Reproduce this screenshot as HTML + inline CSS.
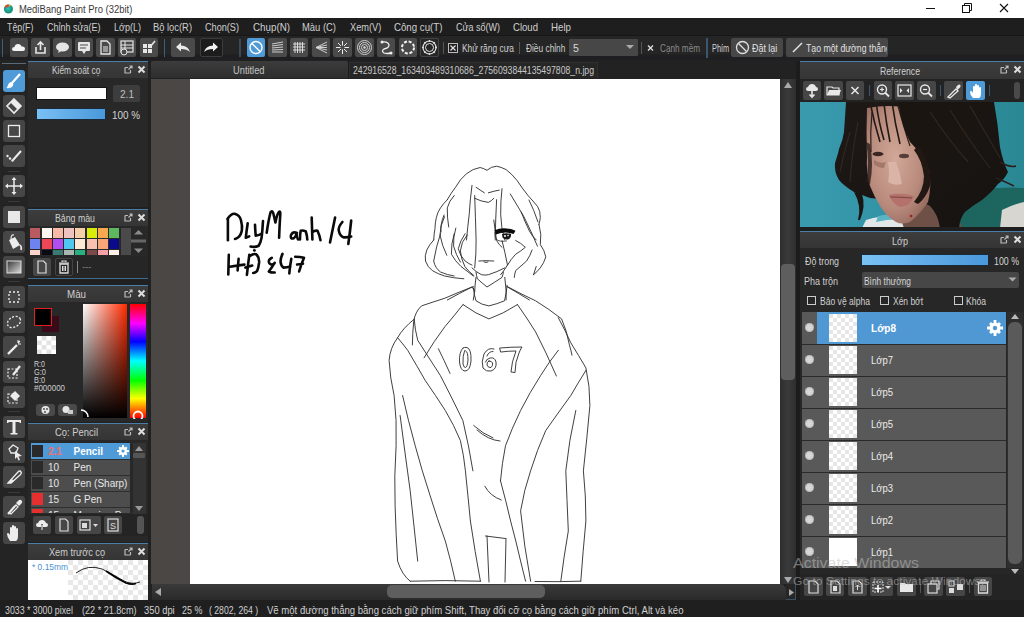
<!DOCTYPE html>
<html><head><meta charset="utf-8">
<style>
*{margin:0;padding:0;box-sizing:border-box}
html,body{width:1024px;height:617px;overflow:hidden;background:#232323;font-family:"Liberation Sans",sans-serif;position:relative}
.a{position:absolute;display:block}
.t{position:absolute;white-space:nowrap;line-height:normal;transform-origin:0 0;font-family:"Liberation Sans",sans-serif}
</style></head><body>
<div class="a" style="left:0px;top:0px;width:1024px;height:18px;background:#ffffff;"></div>
<svg class="a" style="left:3px;top:3px;" width="12" height="12" viewBox="0 0 12 12"><defs><radialGradient id="ib" cx=".45" cy=".45" r=".6"><stop offset="0" stop-color="#30c8b0"/><stop offset=".7" stop-color="#1a9088"/><stop offset="1" stop-color="#2aa860"/></radialGradient></defs><circle cx="5.5" cy="6" r="4.6" fill="url(#ib)"/><path d="M1.6 4.5 Q2.5 1.5 5.5 1.4 Q6 3 4.5 4.2 Q3 5 1.6 4.5Z" fill="#e8402a"/><path d="M5.5 1.4 Q7.5 1.6 8.5 3 Q7 3 6 3.6Z" fill="#f0a030"/></svg>
<div class="t" style="left:18.90px;top:3.55px;font-size:10px;color:#3a3a3a;font-weight:normal;transform:scaleX(0.9444);">MediBang Paint Pro (32bit)</div>
<div class="a" style="left:926px;top:8px;width:9px;height:1px;background:#111;"></div>
<svg class="a" style="left:962px;top:3px;" width="10" height="10" viewBox="0 0 10 10"><rect x="0.5" y="2.5" width="7" height="7" fill="none" stroke="#111"/><path d="M2.5 2.5V0.5H9.5V7.5H7.5" fill="none" stroke="#111"/></svg>
<svg class="a" style="left:999px;top:3px;" width="10" height="10" viewBox="0 0 10 10"><path d="M1 1L9 9M9 1L1 9" stroke="#111" stroke-width="1.1"/></svg>
<div class="a" style="left:0px;top:18px;width:1024px;height:17px;background:#1e1e1e;"></div>
<div class="t" style="left:7.30px;top:20.70px;font-size:10.5px;color:#d0d0d0;font-weight:normal;transform:scaleX(0.8381);">Tệp(F)</div>
<div class="t" style="left:46.90px;top:20.70px;font-size:10.5px;color:#d0d0d0;font-weight:normal;transform:scaleX(0.8580);">Chỉnh sửa(E)</div>
<div class="t" style="left:113.70px;top:20.70px;font-size:10.5px;color:#d0d0d0;font-weight:normal;transform:scaleX(0.8597);">Lớp(L)</div>
<div class="t" style="left:153.00px;top:20.70px;font-size:10.5px;color:#d0d0d0;font-weight:normal;transform:scaleX(0.8911);">Bộ lọc(R)</div>
<div class="t" style="left:205.00px;top:20.70px;font-size:10.5px;color:#d0d0d0;font-weight:normal;transform:scaleX(0.8694);">Chọn(S)</div>
<div class="t" style="left:252.60px;top:20.70px;font-size:10.5px;color:#d0d0d0;font-weight:normal;transform:scaleX(0.9323);">Chụp(N)</div>
<div class="t" style="left:302.30px;top:20.70px;font-size:10.5px;color:#d0d0d0;font-weight:normal;transform:scaleX(0.8966);">Màu (C)</div>
<div class="t" style="left:349.50px;top:20.70px;font-size:10.5px;color:#d0d0d0;font-weight:normal;transform:scaleX(0.8794);">Xem(V)</div>
<div class="t" style="left:394.00px;top:20.70px;font-size:10.5px;color:#d0d0d0;font-weight:normal;transform:scaleX(0.9216);">Công cụ(T)</div>
<div class="t" style="left:455.50px;top:20.70px;font-size:10.5px;color:#d0d0d0;font-weight:normal;transform:scaleX(0.8564);">Cửa sổ(W)</div>
<div class="t" style="left:512.70px;top:20.70px;font-size:10.5px;color:#d0d0d0;font-weight:normal;transform:scaleX(0.9112);">Cloud</div>
<div class="t" style="left:550.80px;top:20.70px;font-size:10.5px;color:#d0d0d0;font-weight:normal;transform:scaleX(0.9255);">Help</div>
<div class="a" style="left:0px;top:35px;width:1024px;height:25px;background:linear-gradient(#252525 0,#252525 76%,#1f1f22 80%,#1f1f22 100%);"></div>
<div class="a" style="left:0px;top:35px;width:1024px;height:1px;background:#171717;"></div>
<div class="a" style="left:2px;top:39px;width:1px;height:18px;background:#3d5d78;"></div>
<div class="a" style="left:10px;top:38px;width:18px;height:19px;background:#4a4a4a;border-radius:2px"></div>
<div class="a" style="left:31px;top:38px;width:19px;height:19px;background:#4a4a4a;border-radius:2px"></div>
<div class="a" style="left:53px;top:38px;width:19px;height:19px;background:#4a4a4a;border-radius:2px"></div>
<div class="a" style="left:75px;top:38px;width:18px;height:19px;background:#4a4a4a;border-radius:2px"></div>
<div class="a" style="left:96px;top:38px;width:19px;height:19px;background:#4a4a4a;border-radius:2px"></div>
<div class="a" style="left:118px;top:38px;width:18px;height:19px;background:#4a4a4a;border-radius:2px"></div>
<div class="a" style="left:140px;top:38px;width:18px;height:19px;background:#4a4a4a;border-radius:2px"></div>
<svg class="a" style="left:10px;top:38px;" width="18" height="19" viewBox="0 0 18 19"><path d="M4 13 Q2 13 2 11 Q2 9 4.5 9 Q5 6 8 6 Q11 6 11.5 8.5 Q15 8 15 11 Q15 13 13 13Z" fill="#f4f4f4"/></svg>
<svg class="a" style="left:31px;top:38px;" width="19" height="19" viewBox="0 0 19 19"><path d="M5 9V15H14V9" fill="none" stroke="#e6e6e6" stroke-width="1.6"/><path d="M9.5 12V4M6.5 7L9.5 4L12.5 7" fill="none" stroke="#e6e6e6" stroke-width="1.6"/></svg>
<svg class="a" style="left:53px;top:38px;" width="19" height="19" viewBox="0 0 19 19"><ellipse cx="9.5" cy="9" rx="6.5" ry="4.5" fill="#e6e6e6"/><path d="M6 12L5 15L9 12.5Z" fill="#e6e6e6"/></svg>
<svg class="a" style="left:75px;top:38px;" width="18" height="19" viewBox="0 0 18 19"><rect x="3" y="4" width="12" height="9" rx="1" fill="#e6e6e6"/><path d="M7 13L9 16L11 13Z" fill="#e6e6e6"/><path d="M5 7H13M5 10H11" stroke="#4a4a4a" stroke-width="1"/></svg>
<svg class="a" style="left:96px;top:38px;" width="19" height="19" viewBox="0 0 19 19"><path d="M5 3H11L14 6V16H5Z" fill="none" stroke="#e6e6e6" stroke-width="1.3"/><path d="M7 9H12M7 11H12M7 13H12" stroke="#e6e6e6" stroke-width="1"/></svg>
<svg class="a" style="left:118px;top:38px;" width="18" height="19" viewBox="0 0 18 19"><rect x="3" y="3" width="12" height="11" fill="none" stroke="#e6e6e6" stroke-width="1.2"/><path d="M3 7H15M3 10H15M7 3V14" stroke="#e6e6e6" stroke-width="1"/><circle cx="6" cy="14" r="3" fill="#4a4a4a" stroke="#e6e6e6" stroke-width="1"/></svg>
<svg class="a" style="left:140px;top:38px;" width="18" height="19" viewBox="0 0 18 19"><rect x="3" y="6" width="4" height="4" fill="#e6e6e6"/><rect x="8" y="6" width="4" height="4" fill="#e6e6e6"/><rect x="3" y="11" width="4" height="4" fill="#e6e6e6"/><rect x="8" y="11" width="4" height="4" fill="#e6e6e6"/><path d="M10 9L15 3" stroke="#e6e6e6" stroke-width="1.6"/></svg>
<div class="a" style="left:164px;top:39px;width:1px;height:18px;background:#3d5d78;"></div>
<div class="a" style="left:171px;top:38px;width:24px;height:19px;background:#4a4a4a;border-radius:2px"></div>
<div class="a" style="left:200px;top:38px;width:23px;height:19px;background:#1c1c1c;border-radius:2px"></div>
<div class="a" style="left:200px;top:38px;width:23px;height:19px;background:#1c1c1c;border:1px solid #3c3c3c;border-radius:2px"></div>
<svg class="a" style="left:171px;top:38px;" width="24" height="19" viewBox="0 0 24 19"><path d="M5 9L10 4.5V7.5Q17 7.5 19 14Q16 11 10 11V13.5Z" fill="#eaeaea"/></svg>
<svg class="a" style="left:200px;top:38px;" width="23" height="19" viewBox="0 0 23 19"><path d="M18 9L13 4.5V7.5Q6 7.5 4 14Q7 11 13 11V13.5Z" fill="#f4f4f4"/></svg>
<div class="a" style="left:239px;top:39px;width:2px;height:18px;background:#3a4a58;"></div>
<div class="a" style="left:247px;top:38px;width:18px;height:19px;background:#4f9bd8;border-radius:2px"></div>
<div class="a" style="left:268px;top:38px;width:19px;height:19px;background:#4a4a4a;border-radius:2px"></div>
<div class="a" style="left:290px;top:38px;width:18px;height:19px;background:#4a4a4a;border-radius:2px"></div>
<div class="a" style="left:312px;top:38px;width:18px;height:19px;background:#4a4a4a;border-radius:2px"></div>
<div class="a" style="left:333px;top:38px;width:19px;height:19px;background:#4a4a4a;border-radius:2px"></div>
<div class="a" style="left:355px;top:38px;width:19px;height:19px;background:#4a4a4a;border-radius:2px"></div>
<div class="a" style="left:377px;top:38px;width:18px;height:19px;background:#4a4a4a;border-radius:2px"></div>
<div class="a" style="left:399px;top:38px;width:18px;height:19px;background:#4a4a4a;border-radius:2px"></div>
<div class="a" style="left:420px;top:38px;width:19px;height:19px;background:#2a2a2a;border-radius:2px"></div>
<div class="a" style="left:420px;top:38px;width:19px;height:19px;background:#262626;border:1px solid #444;border-radius:2px"></div>
<svg class="a" style="left:247px;top:38px;" width="18" height="19" viewBox="0 0 18 19"><circle cx="9" cy="9.5" r="6" fill="none" stroke="#fff" stroke-width="1.4"/><path d="M5 5.5L13 13.5" stroke="#fff" stroke-width="1.4"/></svg>
<svg class="a" style="left:268px;top:38px;" width="19" height="19" viewBox="0 0 19 19"><path d="M4 6L15 4M4 8L15 6.5M4 10L15 9M4 12L15 11.5M4 14L15 14" stroke="#ddd" stroke-width="0.9"/></svg>
<svg class="a" style="left:290px;top:38px;" width="18" height="19" viewBox="0 0 18 19"><path d="M5 4V15M7.5 4V15M10 4V15M12.5 4V15M3 6H15M3 9H15M3 12H15" stroke="#e8e8e8" stroke-width="0.9"/></svg>
<svg class="a" style="left:312px;top:38px;" width="18" height="19" viewBox="0 0 18 19"><path d="M4 9.5L15 4M4 9.5L15 7M4 9.5L15 9.5M4 9.5L15 12M4 9.5L15 15" stroke="#ddd" stroke-width="0.9"/></svg>
<svg class="a" style="left:333px;top:38px;" width="19" height="19" viewBox="0 0 19 19"><path d="M9.5 3V16M3 9.5H16M5 5L14 14M14 5L5 14" stroke="#eee" stroke-width="1"/><circle cx="9.5" cy="9.5" r="2" fill="#4a4a4a"/></svg>
<svg class="a" style="left:355px;top:38px;" width="19" height="19" viewBox="0 0 19 19"><circle cx="9.5" cy="9.5" r="7" fill="none" stroke="#ddd" stroke-width="0.9"/><circle cx="9.5" cy="9.5" r="5" fill="none" stroke="#ddd" stroke-width="0.9"/><circle cx="9.5" cy="9.5" r="3" fill="none" stroke="#ddd" stroke-width="0.9"/><circle cx="9.5" cy="9.5" r="1.2" fill="#ddd"/></svg>
<svg class="a" style="left:377px;top:38px;" width="18" height="19" viewBox="0 0 18 19"><path d="M5 4Q11 3 12 7Q12 10 7 11Q4 13 7 15Q10 16 14 15" fill="none" stroke="#eee" stroke-width="1.3"/><circle cx="5" cy="4" r="1.5" fill="#eee"/><circle cx="14" cy="15" r="1.5" fill="#eee"/></svg>
<svg class="a" style="left:399px;top:38px;" width="18" height="19" viewBox="0 0 18 19"><circle cx="9" cy="9.5" r="6" fill="none" stroke="#f0f0f0" stroke-width="2" stroke-dasharray="3 1.7"/></svg>
<svg class="a" style="left:420px;top:38px;" width="19" height="19" viewBox="0 0 19 19"><circle cx="9.5" cy="9.5" r="6.5" fill="none" stroke="#ddd" stroke-width="1.2"/><circle cx="9.5" cy="9.5" r="4" fill="none" stroke="#ddd" stroke-width="1"/><path d="M9.5 2V4M9.5 15V17M2 9.5H4M15 9.5H17M4.2 4.2L5.6 5.6M13.4 13.4L14.8 14.8M14.8 4.2L13.4 5.6M4.2 14.8L5.6 13.4" stroke="#ddd" stroke-width="1.4"/></svg>
<div class="a" style="left:443px;top:42px;width:1px;height:12px;background:#555;"></div>
<svg class="a" style="left:448px;top:43px;" width="10" height="10" viewBox="0 0 10 10"><rect x="0.5" y="0.5" width="9" height="9" fill="#1e1e1e" stroke="#bbb"/><path d="M2.5 2.5L7.5 7.5M7.5 2.5L2.5 7.5" stroke="#ddd" stroke-width="1.3"/></svg>
<div class="t" style="left:461.60px;top:42.00px;font-size:10.5px;color:#d0d0d0;font-weight:normal;transform:scaleX(0.8019);">Khử răng cưa</div>
<div class="a" style="left:519px;top:42px;width:1px;height:12px;background:#555;"></div>
<div class="t" style="left:525.60px;top:42.00px;font-size:10.5px;color:#d0d0d0;font-weight:normal;transform:scaleX(0.7940);">Điều chỉnh</div>
<div class="a" style="left:569px;top:39px;width:69px;height:17px;background:#474747;border-radius:1px"></div>
<div class="t" style="left:573.00px;top:42.00px;font-size:10.5px;color:#d8d8d8;font-weight:normal;">5</div>
<svg class="a" style="left:625px;top:44px;" width="10" height="6" viewBox="0 0 10 6"><path d="M1 1H9L5 5Z" fill="#aaa"/></svg>
<div class="a" style="left:641px;top:42px;width:1px;height:12px;background:#555;"></div>
<svg class="a" style="left:646px;top:43px;" width="9" height="10" viewBox="0 0 9 10"><path d="M2 2.5L7 7.5M7 2.5L2 7.5" stroke="#ddd" stroke-width="1.4"/></svg>
<div class="t" style="left:659.80px;top:42.00px;font-size:10.5px;color:#8a8a8a;font-weight:normal;transform:scaleX(0.7788);">Cạnh mềm</div>
<div class="a" style="left:706px;top:38px;width:2px;height:20px;background:#3a5670;"></div>
<div class="t" style="left:711.60px;top:42.00px;font-size:10.5px;color:#d0d0d0;font-weight:normal;transform:scaleX(0.7057);">Phím</div>
<div class="a" style="left:731px;top:38px;width:52px;height:19px;background:#474747;border-radius:2px"></div>
<svg class="a" style="left:735px;top:40px;" width="15" height="15" viewBox="0 0 15 15"><circle cx="7.5" cy="7.5" r="6" fill="none" stroke="#e0e0e0" stroke-width="1.3"/><path d="M3.5 3.5L11.5 11.5" stroke="#e0e0e0" stroke-width="1.3"/></svg>
<div class="t" style="left:751.70px;top:42.00px;font-size:10.5px;color:#e0e0e0;font-weight:normal;transform:scaleX(0.8500);">Đặt lại</div>
<div class="a" style="left:786px;top:38px;width:102px;height:19px;background:#474747;border-radius:2px"></div>
<svg class="a" style="left:791px;top:41px;" width="13" height="13" viewBox="0 0 13 13"><path d="M2 11L11 2" stroke="#e8e8e8" stroke-width="1.5"/></svg>
<div class="a" style="left:806px;top:38px;width:81px;height:19px;overflow:hidden">
<div class="t" style="left:0.00px;top:4.00px;font-size:10.5px;color:#e0e0e0;font-weight:normal;transform:scaleX(0.8309);">Tạo một đường thẳng</div>
</div>
<div class="a" style="left:0px;top:60px;width:1024px;height:540px;background:#212121;"></div>
<div class="a" style="left:0px;top:60px;width:28px;height:540px;background:#242424;"></div>
<div class="a" style="left:2px;top:63px;width:24px;height:1px;background:#5a6a78;"></div>
<div class="a" style="left:3px;top:70px;width:22px;height:22px;background:#4f9bd8;border-radius:3px"></div>
<div class="a" style="left:3px;top:95px;width:22px;height:22px;background:#464646;border-radius:3px"></div>
<div class="a" style="left:3px;top:120px;width:22px;height:22px;background:#464646;border-radius:3px"></div>
<div class="a" style="left:3px;top:145px;width:22px;height:22px;background:#464646;border-radius:3px"></div>
<div class="a" style="left:3px;top:175px;width:22px;height:22px;background:#464646;border-radius:3px"></div>
<div class="a" style="left:3px;top:206px;width:22px;height:22px;background:#464646;border-radius:3px"></div>
<div class="a" style="left:3px;top:231px;width:22px;height:22px;background:#464646;border-radius:3px"></div>
<div class="a" style="left:3px;top:256px;width:22px;height:22px;background:#464646;border-radius:3px"></div>
<div class="a" style="left:3px;top:286px;width:22px;height:22px;background:#464646;border-radius:3px"></div>
<div class="a" style="left:3px;top:311px;width:22px;height:22px;background:#464646;border-radius:3px"></div>
<div class="a" style="left:3px;top:336px;width:22px;height:22px;background:#464646;border-radius:3px"></div>
<div class="a" style="left:3px;top:361px;width:22px;height:22px;background:#464646;border-radius:3px"></div>
<div class="a" style="left:3px;top:386px;width:22px;height:22px;background:#464646;border-radius:3px"></div>
<div class="a" style="left:3px;top:416px;width:22px;height:22px;background:#464646;border-radius:3px"></div>
<div class="a" style="left:3px;top:441px;width:22px;height:22px;background:#464646;border-radius:3px"></div>
<div class="a" style="left:3px;top:466px;width:22px;height:22px;background:#464646;border-radius:3px"></div>
<div class="a" style="left:3px;top:496px;width:22px;height:22px;background:#464646;border-radius:3px"></div>
<div class="a" style="left:3px;top:522px;width:22px;height:22px;background:#464646;border-radius:3px"></div>
<div class="a" style="left:8px;top:171px;width:12px;height:1px;background:#3a3a3a;"></div>
<div class="a" style="left:8px;top:201px;width:12px;height:1px;background:#3a3a3a;"></div>
<div class="a" style="left:8px;top:281px;width:12px;height:1px;background:#3a3a3a;"></div>
<div class="a" style="left:8px;top:411px;width:12px;height:1px;background:#3a3a3a;"></div>
<div class="a" style="left:8px;top:492px;width:12px;height:1px;background:#3a3a3a;"></div>
<svg class="a" style="left:3px;top:70px;" width="22" height="22" viewBox="0 0 22 22"><path d="M17 4L9 13" stroke="#fff" stroke-width="2.2"/><path d="M9 12Q6 12 5 15Q4.5 17 3.5 18Q7 18.5 9 17Q11 15 10 13Z" fill="#fff"/></svg>
<svg class="a" style="left:3px;top:95px;" width="22" height="22" viewBox="0 0 22 22"><path d="M11 4L18 11L11 18L4 11Z" fill="none" stroke="#ececec" stroke-width="1.6"/><path d="M11 4L18 11L14.5 14.5L7.5 7.5Z" fill="#ececec"/></svg>
<svg class="a" style="left:3px;top:120px;" width="22" height="22" viewBox="0 0 22 22"><rect x="5.5" y="5.5" width="11" height="11" fill="none" stroke="#ececec" stroke-width="1.3"/></svg>
<svg class="a" style="left:3px;top:145px;" width="22" height="22" viewBox="0 0 22 22"><path d="M10 15L18 6" stroke="#ececec" stroke-width="2"/><circle cx="4.5" cy="11" r="1.2" fill="#ececec"/><circle cx="7" cy="13.5" r="1.2" fill="#ececec"/><circle cx="9.5" cy="15.5" r="1.2" fill="#ececec"/></svg>
<svg class="a" style="left:3px;top:175px;" width="22" height="22" viewBox="0 0 22 22"><path d="M11 3V19M3 11H19" stroke="#ececec" stroke-width="1.5"/><path d="M11 2L8.5 5H13.5ZM11 20L8.5 17H13.5ZM2 11L5 8.5V13.5ZM20 11L17 8.5V13.5Z" fill="#ececec"/></svg>
<svg class="a" style="left:3px;top:206px;" width="22" height="22" viewBox="0 0 22 22"><rect x="5" y="5" width="12" height="12" fill="#e8e8e8"/></svg>
<svg class="a" style="left:3px;top:231px;" width="22" height="22" viewBox="0 0 22 22"><path d="M6 9L12 6L17 14L10 18Z" fill="#ececec"/><path d="M8 8Q8 3 11 4" fill="none" stroke="#ececec" stroke-width="1.2"/><path d="M17 14Q19 16 18 19" stroke="#ececec" stroke-width="1.6" fill="none"/></svg>
<svg class="a" style="left:3px;top:256px;" width="22" height="22" viewBox="0 0 22 22"><defs><linearGradient id="gg" x1="0" y1="0" x2="1" y2="1"><stop offset="0" stop-color="#333"/><stop offset="1" stop-color="#ddd"/></linearGradient></defs><rect x="4" y="5" width="14" height="12" fill="url(#gg)" stroke="#ddd" stroke-width="1"/></svg>
<svg class="a" style="left:3px;top:286px;" width="22" height="22" viewBox="0 0 22 22"><rect x="6" y="6" width="10" height="10" fill="none" stroke="#ececec" stroke-width="1.3" stroke-dasharray="2 2"/></svg>
<svg class="a" style="left:3px;top:311px;" width="22" height="22" viewBox="0 0 22 22"><ellipse cx="11" cy="11" rx="7" ry="5" transform="rotate(-30 11 11)" fill="none" stroke="#ececec" stroke-width="1.3" stroke-dasharray="2 1.6"/></svg>
<svg class="a" style="left:3px;top:336px;" width="22" height="22" viewBox="0 0 22 22"><path d="M5 18L14 9" stroke="#ececec" stroke-width="2.4"/><path d="M15 4V7M18 8H15M17 5L15 7" stroke="#ececec" stroke-width="1.1"/></svg>
<svg class="a" style="left:3px;top:361px;" width="22" height="22" viewBox="0 0 22 22"><rect x="5" y="8" width="9" height="9" fill="none" stroke="#ececec" stroke-width="1.2" stroke-dasharray="2 1.5"/><path d="M10 14L17 5" stroke="#ececec" stroke-width="2.2"/></svg>
<svg class="a" style="left:3px;top:386px;" width="22" height="22" viewBox="0 0 22 22"><rect x="5" y="8" width="9" height="9" fill="none" stroke="#ececec" stroke-width="1.2" stroke-dasharray="2 1.5"/><path d="M12 5L17 10L12 15L7 10Z" fill="#ececec"/></svg>
<svg class="a" style="left:3px;top:416px;" width="22" height="22" viewBox="0 0 22 22"><path d="M4 4H18V7H16.5V6H12.5V17H14.5V18.5H7.5V17H9.5V6H5.5V7H4Z" fill="#ececec"/></svg>
<svg class="a" style="left:3px;top:441px;" width="22" height="22" viewBox="0 0 22 22"><path d="M6 8L10 4L15 7L13 12L8 12Z" fill="none" stroke="#ececec" stroke-width="1.3"/><path d="M12 10L19 15L15.5 15.5L17 19L15.5 19.5L14 16L12 18Z" fill="#ececec"/></svg>
<svg class="a" style="left:3px;top:466px;" width="22" height="22" viewBox="0 0 22 22"><path d="M5 17L15 6Q17 4 18 6Q19 7 17 9L8 17Z" fill="none" stroke="#ececec" stroke-width="1.3"/><path d="M5 17L9 13L11 15L8 17Z" fill="#ececec"/></svg>
<svg class="a" style="left:3px;top:496px;" width="22" height="22" viewBox="0 0 22 22"><path d="M5 18L12 10" stroke="#ececec" stroke-width="2" fill="none"/><path d="M6 17L13 9L15 11L8 18Z" fill="none" stroke="#ececec" stroke-width="1.2"/><path d="M13 7L15 5Q17 3 18.5 4.5Q20 6 18 8L16 10Z" fill="#ececec"/></svg>
<svg class="a" style="left:3px;top:522px;" width="22" height="22" viewBox="0 0 22 22"><path d="M7 19Q4 15 4 12Q4 11 5 11Q6 11 7 13V6Q7 5 8 5Q9 5 9 6V11V4Q9 3 10 3Q11 3 11 4V11V5Q11 4 12 4Q13 4 13 5V11V7Q13 6 14 6Q15 6 15 7V14Q15 18 13 19Z" fill="#ececec"/></svg>
<div class="a" style="left:28px;top:61px;width:120px;height:146px;background:#282828;"></div>
<div class="a" style="left:28px;top:61px;width:120px;height:1px;background:#4a7ea8;"></div>
<div class="a" style="left:28px;top:62px;width:120px;height:16px;background:linear-gradient(#3d3d3d,#353535);"></div>
<div class="t" style="left:51.65px;top:64.00px;font-size:10.5px;color:#cfcfcf;font-weight:normal;transform:scaleX(0.7957);">Kiểm soát cọ</div>
<svg class="a" style="left:124px;top:65px;" width="9" height="9" viewBox="0 0 9 9"><path d="M1 2.5V8H6.5" fill="none" stroke="#bbb" stroke-width="1.2"/><path d="M1 2.5H4M6.5 8V5" stroke="#bbb" stroke-width="1.2"/><path d="M4.5 4.5L8 1M5.5 1H8V3.5" stroke="#bbb" stroke-width="1.2" fill="none"/></svg>
<svg class="a" style="left:137px;top:65px;" width="9" height="9" viewBox="0 0 9 9"><path d="M1.5 1.5L7.5 7.5M7.5 1.5L1.5 7.5" stroke="#ddd" stroke-width="2"/></svg>
<div class="a" style="left:36px;top:87px;width:71px;height:13px;background:#ffffff;border:1px solid #151515"></div>
<div class="a" style="left:113px;top:85px;width:27px;height:17px;background:#3d3d3d;border-radius:2px"></div>
<div class="t" style="left:120.00px;top:88.00px;font-size:10.5px;color:#bdbdbd;font-weight:normal;transform:scaleX(0.9583);">2.1</div>
<div class="a" style="left:36px;top:108px;width:70px;height:12px;background:linear-gradient(90deg,#79c0f4,#4a98da);border:1px solid #1a2a3a"></div>
<div class="t" style="left:111.50px;top:108.50px;font-size:10.5px;color:#d4d4d4;font-weight:normal;transform:scaleX(0.9402);">100 %</div>
<div class="a" style="left:28px;top:209px;width:120px;height:70px;background:#282828;"></div>
<div class="a" style="left:28px;top:209px;width:120px;height:1px;background:#4a7ea8;"></div>
<div class="a" style="left:28px;top:210px;width:120px;height:16px;background:linear-gradient(#3d3d3d,#353535);"></div>
<div class="t" style="left:55.20px;top:212.00px;font-size:10.5px;color:#cfcfcf;font-weight:normal;transform:scaleX(0.8355);">Bảng màu</div>
<svg class="a" style="left:124px;top:213px;" width="9" height="9" viewBox="0 0 9 9"><path d="M1 2.5V8H6.5" fill="none" stroke="#bbb" stroke-width="1.2"/><path d="M1 2.5H4M6.5 8V5" stroke="#bbb" stroke-width="1.2"/><path d="M4.5 4.5L8 1M5.5 1H8V3.5" stroke="#bbb" stroke-width="1.2" fill="none"/></svg>
<svg class="a" style="left:137px;top:213px;" width="9" height="9" viewBox="0 0 9 9"><path d="M1.5 1.5L7.5 7.5M7.5 1.5L1.5 7.5" stroke="#ddd" stroke-width="2"/></svg>
<div class="a" style="left:28px;top:278px;width:120px;height:1px;background:#3e6a8e;"></div>
<div class="a" style="left:30.2px;top:228px;width:10px;height:10px;background:#b85a5e;"></div>
<div class="a" style="left:41.5px;top:228px;width:10px;height:10px;background:#fdf6ef;"></div>
<div class="a" style="left:52.7px;top:228px;width:10px;height:10px;background:#f8b9a7;"></div>
<div class="a" style="left:64.0px;top:228px;width:10px;height:10px;background:#efc4c0;"></div>
<div class="a" style="left:75.2px;top:228px;width:10px;height:10px;background:#f6cea8;"></div>
<div class="a" style="left:86.5px;top:228px;width:10px;height:10px;background:#d9eb08;"></div>
<div class="a" style="left:97.8px;top:228px;width:10px;height:10px;background:#f9a84f;"></div>
<div class="a" style="left:109.0px;top:228px;width:10px;height:10px;background:#5db75e;"></div>
<div class="a" style="left:30.2px;top:239.3px;width:10px;height:10px;background:#6e83ef;"></div>
<div class="a" style="left:41.5px;top:239.3px;width:10px;height:10px;background:#ef4557;"></div>
<div class="a" style="left:52.7px;top:239.3px;width:10px;height:10px;background:#b04ef0;"></div>
<div class="a" style="left:64.0px;top:239.3px;width:10px;height:10px;background:#4fc7ef;"></div>
<div class="a" style="left:75.2px;top:239.3px;width:10px;height:10px;background:#fde8d5;"></div>
<div class="a" style="left:86.5px;top:239.3px;width:10px;height:10px;background:#f8c0ae;"></div>
<div class="a" style="left:97.8px;top:239.3px;width:10px;height:10px;background:#f9a57a;"></div>
<div class="a" style="left:109.0px;top:239.3px;width:10px;height:10px;background:#0a0a8a;"></div>
<div class="a" style="left:30.2px;top:250.4px;width:10px;height:4.4px;background:#f9d3cc;"></div>
<div class="a" style="left:41.5px;top:250.4px;width:10px;height:4.4px;background:#0a0a14;"></div>
<div class="a" style="left:52.7px;top:250.4px;width:10px;height:4.4px;background:#3a7a70;"></div>
<div class="a" style="left:64.0px;top:250.4px;width:10px;height:4.4px;background:#a8b8b0;"></div>
<div class="a" style="left:75.2px;top:250.4px;width:10px;height:4.4px;background:#2ab080;"></div>
<div class="a" style="left:86.5px;top:250.4px;width:10px;height:4.4px;background:#7a4a4a;"></div>
<div class="a" style="left:97.8px;top:250.4px;width:10px;height:4.4px;background:#f6a0a8;"></div>
<div class="a" style="left:109.0px;top:250.4px;width:10px;height:4.4px;background:#fdf0e8;"></div>
<div class="a" style="left:120.6px;top:228px;width:10px;height:27px;background:#4a4a4a;"></div>
<svg class="a" style="left:131px;top:228px;" width="15" height="27" viewBox="0 0 15 27"><path d="M7.5 2L12 6.5H3Z" fill="#8a8a8a"/><rect x="0" y="11.5" width="15" height="3" fill="#666"/><path d="M7.5 25L12 20.5H3Z" fill="#8a8a8a"/></svg>
<div class="a" style="left:28px;top:256px;width:120px;height:22px;background:#262626;"></div>
<div class="a" style="left:33px;top:258px;width:18px;height:18px;background:#474747;border-radius:2px"></div>
<div class="a" style="left:55px;top:258px;width:18px;height:18px;background:#262626;border:1px solid #444;border-radius:2px"></div>
<svg class="a" style="left:33px;top:258px;" width="18" height="18" viewBox="0 0 18 18"><path d="M5 3H10.5L13 5.5V15H5Z" fill="none" stroke="#ddd" stroke-width="1.2"/></svg>
<svg class="a" style="left:55px;top:258px;" width="18" height="18" viewBox="0 0 18 18"><path d="M4 5H14M7 4V3H11V4" stroke="#ddd" stroke-width="1.2" fill="none"/><path d="M5 6H13V15H5Z" fill="none" stroke="#ddd" stroke-width="1.3"/><path d="M7.5 8V13M9 8V13M10.5 8V13" stroke="#ddd" stroke-width="1"/></svg>
<div class="a" style="left:77px;top:261px;width:1px;height:12px;background:#888;"></div>
<div class="t" style="left:82.30px;top:261.86px;font-size:9px;color:#8a8a8a;font-weight:normal;">---</div>
<div class="a" style="left:28px;top:285px;width:120px;height:137px;background:#282828;"></div>
<div class="a" style="left:28px;top:285px;width:120px;height:1px;background:#4a7ea8;"></div>
<div class="a" style="left:28px;top:286px;width:120px;height:16px;background:linear-gradient(#3d3d3d,#353535);"></div>
<div class="t" style="left:66.50px;top:288.00px;font-size:10.5px;color:#cfcfcf;font-weight:normal;transform:scaleX(0.9297);">Màu</div>
<svg class="a" style="left:124px;top:289px;" width="9" height="9" viewBox="0 0 9 9"><path d="M1 2.5V8H6.5" fill="none" stroke="#bbb" stroke-width="1.2"/><path d="M1 2.5H4M6.5 8V5" stroke="#bbb" stroke-width="1.2"/><path d="M4.5 4.5L8 1M5.5 1H8V3.5" stroke="#bbb" stroke-width="1.2" fill="none"/></svg>
<svg class="a" style="left:137px;top:289px;" width="9" height="9" viewBox="0 0 9 9"><path d="M1.5 1.5L7.5 7.5M7.5 1.5L1.5 7.5" stroke="#ddd" stroke-width="2"/></svg>
<div class="a" style="left:42.4px;top:315.7px;width:16.6px;height:16.6px;background:#3a0a18;"></div>
<div class="a" style="left:33.9px;top:307.8px;width:17.8px;height:17.8px;background:#000;border:1.5px solid #e02020"></div>
<svg class="a" style="left:37px;top:336px;" width="19" height="18" viewBox="0 0 19 18"><rect width="19" height="18" fill="#fff"/><rect x="4.75" y="0.0" width="4.75" height="4.5" fill="#e2e2e2"/><rect x="14.25" y="0.0" width="4.75" height="4.5" fill="#e2e2e2"/><rect x="0.0" y="4.5" width="4.75" height="4.5" fill="#e2e2e2"/><rect x="9.5" y="4.5" width="4.75" height="4.5" fill="#e2e2e2"/><rect x="4.75" y="9.0" width="4.75" height="4.5" fill="#e2e2e2"/><rect x="14.25" y="9.0" width="4.75" height="4.5" fill="#e2e2e2"/><rect x="0.0" y="13.5" width="4.75" height="4.5" fill="#e2e2e2"/><rect x="9.5" y="13.5" width="4.75" height="4.5" fill="#e2e2e2"/></svg>
<div class="t" style="left:34.00px;top:358.67px;font-size:9.2px;color:#cfcfcf;font-weight:normal;transform:scaleX(0.7686);">R:0</div>
<div class="t" style="left:34.00px;top:366.77px;font-size:9.2px;color:#cfcfcf;font-weight:normal;transform:scaleX(0.8101);">G:0</div>
<div class="t" style="left:34.00px;top:374.87px;font-size:9.2px;color:#cfcfcf;font-weight:normal;transform:scaleX(0.7973);">B:0</div>
<div class="t" style="left:34.00px;top:382.97px;font-size:9.2px;color:#cfcfcf;font-weight:normal;transform:scaleX(0.8664);">#000000</div>
<div class="a" style="left:36px;top:404px;width:19px;height:12px;background:#4a4a4a;border-radius:3px"></div>
<div class="a" style="left:58px;top:404px;width:19px;height:12px;background:#4a4a4a;border-radius:3px"></div>
<svg class="a" style="left:36px;top:404px;" width="19" height="12" viewBox="0 0 19 12"><circle cx="9.5" cy="6" r="4" fill="#e6e6e6"/><circle cx="8" cy="5" r="0.9" fill="#444"/><circle cx="11" cy="5" r="0.9" fill="#444"/><circle cx="9" cy="8" r="0.9" fill="#444"/></svg>
<svg class="a" style="left:58px;top:404px;" width="19" height="12" viewBox="0 0 19 12"><circle cx="8" cy="5.5" r="3.5" fill="#e6e6e6"/><rect x="10" y="6" width="5" height="4" fill="#ccc"/></svg>
<div class="a" style="left:82.6px;top:303.6px;width:44.4px;height:114px;background:linear-gradient(to bottom,rgba(0,0,0,0),#000),linear-gradient(to right,#fff,#ff2a00)"></div>
<div class="a" style="left:129.7px;top:303.6px;width:16.4px;height:114px;background:linear-gradient(to bottom,#ff0000 0%,#ff00ff 17%,#0000ff 33%,#00ffff 50%,#00ff00 67%,#ffff00 83%,#ff0000 100%)"></div>
<svg class="a" style="left:80px;top:409px;" width="10" height="10" viewBox="0 0 10 10"><path d="M1 1A7 7 0 0 1 8 8" fill="none" stroke="#fff" stroke-width="1.6"/></svg>
<svg class="a" style="left:131px;top:409px;" width="14" height="10" viewBox="0 0 14 10"><circle cx="7" cy="7" r="4.5" fill="none" stroke="#fff" stroke-width="1.8"/></svg>
<div class="a" style="left:28px;top:423px;width:120px;height:119px;background:#282828;"></div>
<div class="a" style="left:28px;top:423px;width:120px;height:1px;background:#4a7ea8;"></div>
<div class="a" style="left:28px;top:424px;width:120px;height:16px;background:linear-gradient(#3d3d3d,#353535);"></div>
<div class="t" style="left:55.10px;top:426.00px;font-size:10.5px;color:#cfcfcf;font-weight:normal;transform:scaleX(0.8985);">Cọ: Pencil</div>
<svg class="a" style="left:124px;top:427px;" width="9" height="9" viewBox="0 0 9 9"><path d="M1 2.5V8H6.5" fill="none" stroke="#bbb" stroke-width="1.2"/><path d="M1 2.5H4M6.5 8V5" stroke="#bbb" stroke-width="1.2"/><path d="M4.5 4.5L8 1M5.5 1H8V3.5" stroke="#bbb" stroke-width="1.2" fill="none"/></svg>
<svg class="a" style="left:137px;top:427px;" width="9" height="9" viewBox="0 0 9 9"><path d="M1.5 1.5L7.5 7.5M7.5 1.5L1.5 7.5" stroke="#ddd" stroke-width="2"/></svg>
<div class="a" style="left:31px;top:443px;width:99px;height:71px;background:#4d4d4d;"></div>
<div class="a" style="left:31px;top:443px;width:99px;height:16px;background:#4f9bd8;"></div>
<div class="a" style="left:32px;top:445px;width:11px;height:12px;background:#2a2a2a;"></div>
<div class="t" style="left:48.00px;top:445.95px;font-size:10px;color:#f07070;font-weight:bold;">2.1</div>
<div class="t" style="left:73.50px;top:445.95px;font-size:10px;color:#ffffff;font-weight:bold;">Pencil</div>
<div class="a" style="left:31px;top:459px;width:99px;height:1px;background:#2e2e2e;"></div>
<div class="a" style="left:32px;top:461px;width:11px;height:12px;background:#2a2a2a;"></div>
<div class="t" style="left:48.00px;top:461.95px;font-size:10px;color:#e8e8e8;font-weight:normal;">10</div>
<div class="t" style="left:73.50px;top:461.95px;font-size:10px;color:#e8e8e8;font-weight:normal;">Pen</div>
<div class="a" style="left:31px;top:475px;width:99px;height:1px;background:#2e2e2e;"></div>
<div class="a" style="left:32px;top:477px;width:11px;height:12px;background:#2a2a2a;"></div>
<div class="t" style="left:48.00px;top:477.95px;font-size:10px;color:#e8e8e8;font-weight:normal;">10</div>
<div class="t" style="left:73.50px;top:477.95px;font-size:10px;color:#e8e8e8;font-weight:normal;">Pen (Sharp)</div>
<div class="a" style="left:31px;top:491px;width:99px;height:1px;background:#2e2e2e;"></div>
<div class="a" style="left:32px;top:493px;width:11px;height:12px;background:#e53030;"></div>
<div class="t" style="left:48.00px;top:493.95px;font-size:10px;color:#e8e8e8;font-weight:normal;">15</div>
<div class="t" style="left:73.50px;top:493.95px;font-size:10px;color:#e8e8e8;font-weight:normal;">G Pen</div>
<div class="a" style="left:31px;top:507px;width:99px;height:1px;background:#2e2e2e;"></div>
<div class="a" style="left:32px;top:509px;width:11px;height:12px;background:#e53030;"></div>
<div class="t" style="left:48.00px;top:509.95px;font-size:10px;color:#e8e8e8;font-weight:normal;">15</div>
<div class="t" style="left:73.50px;top:509.95px;font-size:10px;color:#e8e8e8;font-weight:normal;">Mapping Pen</div>
<div class="a" style="left:28px;top:513px;width:104px;height:1px;background:#2a2a2a;"></div>
<svg class="a" style="left:116px;top:444px;" width="14" height="14" viewBox="0 0 14 14"><g fill="#fff"><circle cx="7" cy="7" r="4"/><path d="M6 1H8V13H6ZM1 6H13V8H1Z"/><path d="M2.5 3.9L3.9 2.5L11.5 10.1L10.1 11.5ZM10.1 2.5L11.5 3.9L3.9 11.5L2.5 10.1Z"/></g><circle cx="7" cy="7" r="1.6" fill="#4f9bd8"/></svg>
<div class="a" style="left:132.5px;top:443px;width:13px;height:71px;background:#333;"></div>
<svg class="a" style="left:132px;top:443px;" width="14" height="71" viewBox="0 0 14 71"><path d="M7 3L11 8H3Z" fill="#9a9a9a"/><rect x="1" y="10" width="12" height="5" fill="#555" rx="1"/><path d="M7 68L11 63H3Z" fill="#9a9a9a"/></svg>
<div class="a" style="left:28px;top:514px;width:120px;height:22px;background:#242424;"></div>
<div class="a" style="left:33px;top:516px;width:18px;height:18px;background:#464646;border-radius:2px"></div>
<div class="a" style="left:55px;top:516px;width:18px;height:18px;background:#464646;border-radius:2px"></div>
<div class="a" style="left:77px;top:516px;width:24px;height:18px;background:#464646;border-radius:2px"></div>
<div class="a" style="left:104px;top:516px;width:18px;height:18px;background:#464646;border-radius:2px"></div>
<div class="a" style="left:137px;top:516px;width:7px;height:18px;background:#555;border-radius:3px"></div>
<svg class="a" style="left:33px;top:516px;" width="18" height="18" viewBox="0 0 18 18"><path d="M5 11Q3 11 3 9Q3 7 5 7Q6 4 9 4Q12 4 13 7Q15 7 15 9Q15 11 13 11Z" fill="#eee"/><path d="M9 8V15M6.5 12.5L9 15L11.5 12.5" stroke="#464646" stroke-width="1.4" fill="none"/><path d="M9 9V14" stroke="#eee" stroke-width="1"/></svg>
<svg class="a" style="left:55px;top:516px;" width="18" height="18" viewBox="0 0 18 18"><path d="M5 3H10.5L13 5.5V15H5Z" fill="none" stroke="#ddd" stroke-width="1.2"/></svg>
<svg class="a" style="left:77px;top:516px;" width="24" height="18" viewBox="0 0 24 18"><rect x="3" y="4" width="10" height="10" fill="none" stroke="#ddd" stroke-width="1.2"/><rect x="5" y="7" width="5" height="5" fill="#ddd"/><path d="M16 8H21L18.5 11Z" fill="#ddd"/></svg>
<svg class="a" style="left:104px;top:516px;" width="18" height="18" viewBox="0 0 18 18"><rect x="4" y="3" width="10" height="12" fill="none" stroke="#ddd" stroke-width="1.2"/><text x="9" y="13" font-size="9" fill="#ddd" text-anchor="middle" font-family="Liberation Sans">S</text></svg>
<div class="a" style="left:28px;top:543px;width:120px;height:57px;background:#282828;"></div>
<div class="a" style="left:28px;top:543px;width:120px;height:1px;background:#4a7ea8;"></div>
<div class="a" style="left:28px;top:544px;width:120px;height:16px;background:linear-gradient(#3d3d3d,#353535);"></div>
<div class="t" style="left:48.60px;top:546.00px;font-size:10.5px;color:#cfcfcf;font-weight:normal;transform:scaleX(0.8737);">Xem trước cọ</div>
<svg class="a" style="left:124px;top:547px;" width="9" height="9" viewBox="0 0 9 9"><path d="M1 2.5V8H6.5" fill="none" stroke="#bbb" stroke-width="1.2"/><path d="M1 2.5H4M6.5 8V5" stroke="#bbb" stroke-width="1.2"/><path d="M4.5 4.5L8 1M5.5 1H8V3.5" stroke="#bbb" stroke-width="1.2" fill="none"/></svg>
<svg class="a" style="left:137px;top:547px;" width="9" height="9" viewBox="0 0 9 9"><path d="M1.5 1.5L7.5 7.5M7.5 1.5L1.5 7.5" stroke="#ddd" stroke-width="2"/></svg>
<div class="a" style="left:28px;top:560px;width:40px;height:40px;background:#ffffff;"></div>
<svg class="a" style="left:68px;top:560px;" width="80" height="40" viewBox="0 0 80 40"><defs><pattern id="ck" width="10" height="10" patternUnits="userSpaceOnUse"><rect width="10" height="10" fill="#fff"/><rect width="5" height="5" fill="#e8e8e8"/><rect x="5" y="5" width="5" height="5" fill="#e8e8e8"/></pattern></defs><rect width="80" height="40" fill="url(#ck)"/><path d="M8 13Q20 4 34 9Q46 15 56 21Q64 25 72 22" fill="none" stroke="#222" stroke-width="1"/><path d="M38 11Q48 18 58 23Q64 25 68 23.5" fill="none" stroke="#000" stroke-width="1.8"/></svg>
<div class="t" style="left:32.00px;top:562.36px;font-size:9px;color:#4a8fd0;font-weight:normal;transform:scaleX(0.9347);">* 0.15mm</div>
<div class="a" style="left:151px;top:61px;width:647px;height:19px;background:#222222;"></div>
<div class="a" style="left:151px;top:61px;width:197px;height:17px;background:linear-gradient(#3c3c3c,#2e2e2e);border-radius:2px 2px 0 0"></div>
<div class="a" style="left:349px;top:62px;width:249px;height:16px;background:#262626;border:1px solid #2e2e2e;border-bottom:none"></div>
<div class="t" style="left:232.75px;top:64.75px;font-size:10px;color:#c4c4c4;font-weight:normal;transform:scaleX(0.9290);">Untitled</div>
<div class="a" style="left:348px;top:61px;width:1px;height:18px;background:#1b1b1b;"></div>
<div class="t" style="left:353.00px;top:65.15px;font-size:10px;color:#c8c8c8;font-weight:normal;transform:scaleX(0.8684);">242916528_163403489310686_2756093844135497808_n.jpg</div>
<div class="a" style="left:151px;top:79px;width:629px;height:505px;background:#4a4744;"></div>
<div class="a" style="left:190px;top:79px;width:590px;height:505px;background:#ffffff;"></div>
<div class="a" style="left:780px;top:79px;width:16px;height:505px;background:linear-gradient(90deg,#2e2e2e,#3a3a3a,#2e2e2e);"></div>
<div class="a" style="left:781px;top:264px;width:14px;height:116px;background:#5e5e5e;border-radius:4px"></div>
<svg class="a" style="left:780px;top:79px;" width="16" height="12" viewBox="0 0 16 12"><path d="M8 3L12 9H4Z" fill="#aaa"/></svg>
<svg class="a" style="left:780px;top:575px;" width="16" height="10" viewBox="0 0 16 10"><path d="M8 8L12 2H4Z" fill="#aaa"/></svg>
<div class="a" style="left:152px;top:584px;width:634px;height:16px;background:linear-gradient(#3a3a3a,#2a2a2a);border-radius:0 6px 0 0"></div>
<div class="a" style="left:786px;top:584px;width:10px;height:16px;background:#262626;border:1px solid #3a5060;border-top:none;border-left:none"></div>
<div class="a" style="left:387px;top:585px;width:158px;height:13px;background:#5e5e5e;border-radius:5px"></div>
<svg class="a" style="left:152px;top:584px;" width="12" height="16" viewBox="0 0 12 16"><path d="M3 8L9 4V12Z" fill="#aaa"/></svg>
<svg class="a" style="left:786px;top:584px;" width="10" height="16" viewBox="0 0 10 16"><path d="M8 8.5L3 5V12Z" fill="#aaa"/></svg>
<div class="a" style="left:796px;top:61px;width:4px;height:540px;background:#1c1c1c;"></div>
<div class="a" style="left:800px;top:61px;width:224px;height:539px;background:#262626;"></div>
<div class="a" style="left:800px;top:61px;width:224px;height:1px;background:#4a7ea8;"></div>
<div class="a" style="left:800px;top:62px;width:224px;height:17px;background:linear-gradient(#3d3d3d,#353535);"></div>
<div class="t" style="left:879.50px;top:65.00px;font-size:10.5px;color:#d0d0d0;font-weight:normal;transform:scaleX(0.8255);">Reference</div>
<svg class="a" style="left:1000px;top:65px;" width="9" height="9" viewBox="0 0 9 9"><path d="M1 2.5V8H6.5" fill="none" stroke="#bbb" stroke-width="1.2"/><path d="M1 2.5H4M6.5 8V5" stroke="#bbb" stroke-width="1.2"/><path d="M4.5 4.5L8 1M5.5 1H8V3.5" stroke="#bbb" stroke-width="1.2" fill="none"/></svg>
<svg class="a" style="left:1013px;top:65px;" width="9" height="9" viewBox="0 0 9 9"><path d="M1.5 1.5L7.5 7.5M7.5 1.5L1.5 7.5" stroke="#ddd" stroke-width="2"/></svg>
<div class="a" style="left:800px;top:79px;width:224px;height:23px;background:#232323;"></div>
<div class="a" style="left:803px;top:81px;width:18px;height:19px;background:#464646;border-radius:2px"></div>
<div class="a" style="left:824px;top:81px;width:19px;height:19px;background:#464646;border-radius:2px"></div>
<div class="a" style="left:846px;top:81px;width:18px;height:19px;background:#464646;border-radius:2px"></div>
<div class="a" style="left:874px;top:81px;width:18px;height:19px;background:#464646;border-radius:2px"></div>
<div class="a" style="left:895px;top:81px;width:19px;height:19px;background:#464646;border-radius:2px"></div>
<div class="a" style="left:917px;top:81px;width:19px;height:19px;background:#464646;border-radius:2px"></div>
<div class="a" style="left:944px;top:81px;width:19px;height:19px;background:#464646;border-radius:2px"></div>
<div class="a" style="left:966px;top:81px;width:19px;height:19px;background:#4f9bd8;border-radius:2px"></div>
<div class="a" style="left:869px;top:85px;width:1px;height:11px;background:#3a5670;"></div>
<div class="a" style="left:940px;top:85px;width:1px;height:11px;background:#3a5670;"></div>
<div class="a" style="left:989px;top:85px;width:1px;height:11px;background:#3a5670;"></div>
<div class="a" style="left:1014px;top:82px;width:6px;height:17px;background:#4a4a4a;border-radius:3px"></div>
<svg class="a" style="left:803px;top:81px;" width="18" height="19" viewBox="0 0 18 19"><path d="M5 10Q3 10 3 8Q3 6 5 6Q6 3 9 3Q12 3 13 6Q15 6 15 8Q15 10 13 10Z" fill="#e8e8e8"/><path d="M9 8V16M6.5 13.5L9 16L11.5 13.5" stroke="#e8e8e8" stroke-width="1.6" fill="none"/></svg>
<svg class="a" style="left:824px;top:81px;" width="19" height="19" viewBox="0 0 19 19"><path d="M3 6H8L9 7H15V14H3Z" fill="none" stroke="#e8e8e8" stroke-width="1.2"/><path d="M3 14L5 9H17L15 14Z" fill="#e8e8e8"/></svg>
<svg class="a" style="left:846px;top:81px;" width="18" height="19" viewBox="0 0 18 19"><path d="M5.5 6L12.5 13M12.5 6L5.5 13" stroke="#e8e8e8" stroke-width="1.5"/></svg>
<svg class="a" style="left:874px;top:81px;" width="18" height="19" viewBox="0 0 18 19"><circle cx="8" cy="8.5" r="4.5" fill="none" stroke="#e8e8e8" stroke-width="1.4"/><path d="M11 11.5L15 15.5" stroke="#e8e8e8" stroke-width="1.8"/><path d="M6 8.5H10M8 6.5V10.5" stroke="#e8e8e8" stroke-width="1.2"/></svg>
<svg class="a" style="left:895px;top:81px;" width="19" height="19" viewBox="0 0 19 19"><rect x="3" y="4" width="13" height="11" fill="none" stroke="#e8e8e8" stroke-width="1.2"/><path d="M5 7L7.5 9.5L5 12ZM14 7L11.5 9.5L14 12Z" fill="#e8e8e8"/></svg>
<svg class="a" style="left:917px;top:81px;" width="19" height="19" viewBox="0 0 19 19"><circle cx="8" cy="8.5" r="4.5" fill="none" stroke="#e8e8e8" stroke-width="1.4"/><path d="M11 11.5L15 15.5" stroke="#e8e8e8" stroke-width="1.8"/><path d="M6 8.5H10" stroke="#e8e8e8" stroke-width="1.2"/></svg>
<svg class="a" style="left:944px;top:81px;" width="19" height="19" viewBox="0 0 19 19"><path d="M4 16L12 8L14 10L6 17Z" fill="none" stroke="#e8e8e8" stroke-width="1.3"/><path d="M12 6L14 4Q16 3 16.5 4.5Q17 6 15 7.5L13.5 9Z" fill="#e8e8e8"/></svg>
<svg class="a" style="left:966px;top:81px;" width="19" height="19" viewBox="0 0 19 19"><path d="M7 17Q4 14 4 11Q4 10 5 10Q6 10 7 12V6Q7 5 8 5Q9 5 9 6V10V4Q9 3 10 3Q11 3 11 4V10V5Q11 4 12 4Q13 4 13 5V10V7Q13 6 14 6Q15 6 15 7V13Q15 16 13 17Z" fill="#fff"/></svg>
<svg class="a" style="left:800px;top:102px;" width="224" height="126" viewBox="0 0 224 126"><defs><linearGradient id="tl" x1="0" y1="0" x2="1" y2="0"><stop offset="0" stop-color="#3a9bae"/><stop offset=".4" stop-color="#3293a6"/><stop offset="1" stop-color="#2a8894"/></linearGradient>
<radialGradient id="sk" cx=".45" cy=".45" r=".6"><stop offset="0" stop-color="#d2a898"/><stop offset=".7" stop-color="#b88a7c"/><stop offset="1" stop-color="#9a6e62"/></radialGradient>
<linearGradient id="hr" x1="0" y1="0" x2="1" y2="1"><stop offset="0" stop-color="#1e1916"/><stop offset="1" stop-color="#16120f"/></linearGradient></defs>
<rect width="224" height="126" fill="url(#tl)"/>
<path d="M160 92 Q190 84 224 86 V126 H150Z" fill="#1d6660"/>
<path d="M202 108 Q214 102 224 100 V126 H200Z" fill="#d8d6d0"/>
<path d="M66 118 Q84 112 110 114 L112 126 H62Z" fill="#e2e8e8"/>
<path d="M78 114 Q96 110 110 112 L110 118 Q92 116 76 120Z" fill="#5ab4c4"/>
<path d="M112 96 Q130 100 150 104 Q158 112 162 126 H104 Q100 118 104 110Z" fill="#6e5046"/>
<path d="M46 0 H194 Q198 22 200 45 Q203 60 208 70 Q204 78 198 82 Q192 90 182 98 Q172 104 165 110 Q160 116 159 126 H140 Q138 112 130 104 Q116 96 104 96 Q86 98 70 96 Q60 92 54 90 Q44 84 39 78 Q34 70 35 61 Q38 52 39 47 Q43 38 44 30 Q45 15 46 0Z" fill="url(#hr)"/>
<path d="M54 90 Q62 104 58 118 L60 118 Q66 104 62 92Z" fill="#1a1512"/>
<path d="M67 6 Q88 2 112 6 Q114 30 116 46 Q124 54 129 68 Q132 84 128 100 Q120 112 110 120 Q102 123 96 120 Q86 114 80 104 Q74 94 70 84 Q66 70 67 55 Q66 30 67 6Z" fill="url(#sk)"/>
<path d="M70 0 Q74 20 80 40 M76 0 Q79 22 84 38 M84 2 Q86 20 90 40 M92 0 Q95 22 100 42" stroke="#231a16" stroke-width="1.6" fill="none"/>
<path d="M72 10 Q70 30 71 50 M98 4 Q104 26 110 44" stroke="#2a201b" stroke-width="1.2" fill="none"/>
<path d="M98 0 H194 Q180 20 160 40 Q140 54 128 62 Q118 48 110 40 Q102 25 98 0Z" fill="#1b1512"/>
<path d="M106 10 Q112 30 118 40 Q124 30 120 10Z" fill="#1b1512"/>
<path d="M118 44 Q132 60 130 84 Q126 96 118 102 L114 100 Q124 88 124 74 Q122 58 114 48Z" fill="#211814"/>
<path d="M66 40 Q70 60 66 80 L70 82 Q74 62 70 42Z" fill="#2a1e1a" opacity=".8"/>
<path d="M130 10 Q150 40 168 60 M150 8 Q170 40 190 66 M170 4 Q185 30 200 56 M50 30 Q44 50 40 70 M58 20 Q52 50 50 80" stroke="#3a2e28" stroke-width="1.2" fill="none" opacity=".7"/><path d="M200 60 Q210 66 216 64 M196 76 Q206 80 214 84" stroke="#2a1f1a" stroke-width="1.5" fill="none"/><ellipse cx="78" cy="52" rx="5.5" ry="2.2" fill="#3a2620"/>
<ellipse cx="104" cy="54" rx="5" ry="2.2" fill="#3a2620" opacity=".8"/>
<path d="M74 58 Q80 62 86 60 L84 66 Q78 66 74 62Z" fill="#8e6458" opacity=".6"/>
<path d="M88 60 Q90 72 88 80 Q94 84 102 82 Q100 70 96 60Z" fill="#dab4a6"/>
<path d="M89 93 Q100 90 114 94 Q111 104 101 105 Q93 103 89 93Z" fill="#b5716c"/>
<path d="M90 95 Q101 95 112 96" stroke="#7a4440" stroke-width="1" fill="none"/>
<circle cx="111" cy="114" r="1.3" fill="#a02020"/>
</svg>
<div class="a" style="left:800px;top:227px;width:224px;height:4px;background:#1e1e1e;"></div>
<div class="a" style="left:800px;top:231px;width:224px;height:1px;background:#4a7ea8;"></div>
<div class="a" style="left:800px;top:232px;width:224px;height:16px;background:linear-gradient(#3d3d3d,#353535);"></div>
<div class="t" style="left:891.60px;top:234.50px;font-size:10.5px;color:#d0d0d0;font-weight:normal;transform:scaleX(0.8612);">Lớp</div>
<svg class="a" style="left:1000px;top:235px;" width="9" height="9" viewBox="0 0 9 9"><path d="M1 2.5V8H6.5" fill="none" stroke="#bbb" stroke-width="1.2"/><path d="M1 2.5H4M6.5 8V5" stroke="#bbb" stroke-width="1.2"/><path d="M4.5 4.5L8 1M5.5 1H8V3.5" stroke="#bbb" stroke-width="1.2" fill="none"/></svg>
<svg class="a" style="left:1013px;top:235px;" width="9" height="9" viewBox="0 0 9 9"><path d="M1.5 1.5L7.5 7.5M7.5 1.5L1.5 7.5" stroke="#ddd" stroke-width="2"/></svg>
<div class="a" style="left:800px;top:248px;width:224px;height:352px;background:#272727;"></div>
<div class="t" style="left:804.50px;top:255.00px;font-size:10.5px;color:#d0d0d0;font-weight:normal;transform:scaleX(0.8441);">Độ trong</div>
<div class="a" style="left:861px;top:253.5px;width:128px;height:12px;background:linear-gradient(90deg,#79c0f4,#4a98da);border:1px solid #1a2a3a"></div>
<div class="t" style="left:994.00px;top:255.00px;font-size:10.5px;color:#d4d4d4;font-weight:normal;transform:scaleX(0.8395);">100 %</div>
<div class="t" style="left:804.00px;top:274.50px;font-size:10.5px;color:#d0d0d0;font-weight:normal;transform:scaleX(0.8564);">Pha trộn</div>
<div class="a" style="left:862px;top:271.5px;width:157px;height:16px;background:#474747;border-radius:2px"></div>
<div class="t" style="left:864.00px;top:274.50px;font-size:10.5px;color:#d4d4d4;font-weight:normal;transform:scaleX(0.7983);">Bình thường</div>
<svg class="a" style="left:1008px;top:277px;" width="9" height="6" viewBox="0 0 9 6"><path d="M0.5 0.5H8.5L4.5 4.5Z" fill="#aaa"/></svg>
<div class="a" style="left:807px;top:296px;width:9px;height:9px;background:transparent;border:1px solid #ccc"></div>
<div class="t" style="left:820.00px;top:295.00px;font-size:10.5px;color:#d0d0d0;font-weight:normal;transform:scaleX(0.8155);">Bảo vệ alpha</div>
<div class="a" style="left:880px;top:296px;width:9px;height:9px;background:transparent;border:1px solid #ccc"></div>
<div class="t" style="left:893.00px;top:295.00px;font-size:10.5px;color:#d0d0d0;font-weight:normal;transform:scaleX(0.8054);">Xén bớt</div>
<div class="a" style="left:953.5px;top:296px;width:9px;height:9px;background:transparent;border:1px solid #ccc"></div>
<div class="t" style="left:966.00px;top:295.00px;font-size:10.5px;color:#d0d0d0;font-weight:normal;transform:scaleX(0.8153);">Khóa</div>
<div class="a" style="left:802px;top:312px;width:204px;height:256px;background:#2a2a2a;"></div>
<div class="a" style="left:802px;top:312px;width:204px;height:32px;background:#595959;"></div>
<div class="a" style="left:817px;top:312px;width:189px;height:32px;background:#4f98d4;"></div>
<div class="a" style="left:805px;top:323px;width:9px;height:9px;background:#d8d8d8;border-radius:50%;box-shadow:inset 0 0 2px #888"></div>
<svg class="a" style="left:829px;top:314px;" width="28" height="28" viewBox="0 0 28 28"><rect width="28" height="28" fill="#fff"/><g fill="#e6e6e6"><rect x="0" y="0" width="4" height="4"/><rect x="8" y="0" width="4" height="4"/><rect x="16" y="0" width="4" height="4"/><rect x="24" y="0" width="4" height="4"/><rect x="4" y="4" width="4" height="4"/><rect x="12" y="4" width="4" height="4"/><rect x="20" y="4" width="4" height="4"/><rect x="0" y="8" width="4" height="4"/><rect x="8" y="8" width="4" height="4"/><rect x="16" y="8" width="4" height="4"/><rect x="24" y="8" width="4" height="4"/><rect x="4" y="12" width="4" height="4"/><rect x="12" y="12" width="4" height="4"/><rect x="20" y="12" width="4" height="4"/><rect x="0" y="16" width="4" height="4"/><rect x="8" y="16" width="4" height="4"/><rect x="16" y="16" width="4" height="4"/><rect x="24" y="16" width="4" height="4"/><rect x="4" y="20" width="4" height="4"/><rect x="12" y="20" width="4" height="4"/><rect x="20" y="20" width="4" height="4"/><rect x="0" y="24" width="4" height="4"/><rect x="8" y="24" width="4" height="4"/><rect x="16" y="24" width="4" height="4"/><rect x="24" y="24" width="4" height="4"/></g></svg>
<div class="t" style="left:870.60px;top:322.00px;font-size:10.5px;color:#ffffff;font-weight:bold;transform:scaleX(0.9564);">Lớp8</div>
<div class="a" style="left:802px;top:345px;width:204px;height:31px;background:#595959;"></div>
<div class="a" style="left:805px;top:355px;width:9px;height:9px;background:#d8d8d8;border-radius:50%;box-shadow:inset 0 0 2px #888"></div>
<svg class="a" style="left:829px;top:346px;" width="28" height="28" viewBox="0 0 28 28"><rect width="28" height="28" fill="#fff"/><g fill="#e6e6e6"><rect x="0" y="0" width="4" height="4"/><rect x="8" y="0" width="4" height="4"/><rect x="16" y="0" width="4" height="4"/><rect x="24" y="0" width="4" height="4"/><rect x="4" y="4" width="4" height="4"/><rect x="12" y="4" width="4" height="4"/><rect x="20" y="4" width="4" height="4"/><rect x="0" y="8" width="4" height="4"/><rect x="8" y="8" width="4" height="4"/><rect x="16" y="8" width="4" height="4"/><rect x="24" y="8" width="4" height="4"/><rect x="4" y="12" width="4" height="4"/><rect x="12" y="12" width="4" height="4"/><rect x="20" y="12" width="4" height="4"/><rect x="0" y="16" width="4" height="4"/><rect x="8" y="16" width="4" height="4"/><rect x="16" y="16" width="4" height="4"/><rect x="24" y="16" width="4" height="4"/><rect x="4" y="20" width="4" height="4"/><rect x="12" y="20" width="4" height="4"/><rect x="20" y="20" width="4" height="4"/><rect x="0" y="24" width="4" height="4"/><rect x="8" y="24" width="4" height="4"/><rect x="16" y="24" width="4" height="4"/><rect x="24" y="24" width="4" height="4"/></g></svg>
<div class="t" style="left:870.60px;top:354.00px;font-size:10.5px;color:#ececec;font-weight:normal;transform:scaleX(0.9014);">Lớp7</div>
<div class="a" style="left:802px;top:377px;width:204px;height:31px;background:#595959;"></div>
<div class="a" style="left:805px;top:387px;width:9px;height:9px;background:#d8d8d8;border-radius:50%;box-shadow:inset 0 0 2px #888"></div>
<svg class="a" style="left:829px;top:378px;" width="28" height="28" viewBox="0 0 28 28"><rect width="28" height="28" fill="#fff"/><g fill="#e6e6e6"><rect x="0" y="0" width="4" height="4"/><rect x="8" y="0" width="4" height="4"/><rect x="16" y="0" width="4" height="4"/><rect x="24" y="0" width="4" height="4"/><rect x="4" y="4" width="4" height="4"/><rect x="12" y="4" width="4" height="4"/><rect x="20" y="4" width="4" height="4"/><rect x="0" y="8" width="4" height="4"/><rect x="8" y="8" width="4" height="4"/><rect x="16" y="8" width="4" height="4"/><rect x="24" y="8" width="4" height="4"/><rect x="4" y="12" width="4" height="4"/><rect x="12" y="12" width="4" height="4"/><rect x="20" y="12" width="4" height="4"/><rect x="0" y="16" width="4" height="4"/><rect x="8" y="16" width="4" height="4"/><rect x="16" y="16" width="4" height="4"/><rect x="24" y="16" width="4" height="4"/><rect x="4" y="20" width="4" height="4"/><rect x="12" y="20" width="4" height="4"/><rect x="20" y="20" width="4" height="4"/><rect x="0" y="24" width="4" height="4"/><rect x="8" y="24" width="4" height="4"/><rect x="16" y="24" width="4" height="4"/><rect x="24" y="24" width="4" height="4"/></g></svg>
<div class="t" style="left:870.60px;top:386.00px;font-size:10.5px;color:#ececec;font-weight:normal;transform:scaleX(0.9014);">Lớp5</div>
<div class="a" style="left:802px;top:409px;width:204px;height:31px;background:#595959;"></div>
<div class="a" style="left:805px;top:419px;width:9px;height:9px;background:#d8d8d8;border-radius:50%;box-shadow:inset 0 0 2px #888"></div>
<svg class="a" style="left:829px;top:410px;" width="28" height="28" viewBox="0 0 28 28"><rect width="28" height="28" fill="#fff"/><g fill="#e6e6e6"><rect x="0" y="0" width="4" height="4"/><rect x="8" y="0" width="4" height="4"/><rect x="16" y="0" width="4" height="4"/><rect x="24" y="0" width="4" height="4"/><rect x="4" y="4" width="4" height="4"/><rect x="12" y="4" width="4" height="4"/><rect x="20" y="4" width="4" height="4"/><rect x="0" y="8" width="4" height="4"/><rect x="8" y="8" width="4" height="4"/><rect x="16" y="8" width="4" height="4"/><rect x="24" y="8" width="4" height="4"/><rect x="4" y="12" width="4" height="4"/><rect x="12" y="12" width="4" height="4"/><rect x="20" y="12" width="4" height="4"/><rect x="0" y="16" width="4" height="4"/><rect x="8" y="16" width="4" height="4"/><rect x="16" y="16" width="4" height="4"/><rect x="24" y="16" width="4" height="4"/><rect x="4" y="20" width="4" height="4"/><rect x="12" y="20" width="4" height="4"/><rect x="20" y="20" width="4" height="4"/><rect x="0" y="24" width="4" height="4"/><rect x="8" y="24" width="4" height="4"/><rect x="16" y="24" width="4" height="4"/><rect x="24" y="24" width="4" height="4"/></g></svg>
<div class="t" style="left:870.60px;top:418.00px;font-size:10.5px;color:#ececec;font-weight:normal;transform:scaleX(0.9014);">Lớp5</div>
<div class="a" style="left:802px;top:441px;width:204px;height:31px;background:#595959;"></div>
<div class="a" style="left:805px;top:451px;width:9px;height:9px;background:#d8d8d8;border-radius:50%;box-shadow:inset 0 0 2px #888"></div>
<svg class="a" style="left:829px;top:442px;" width="28" height="28" viewBox="0 0 28 28"><rect width="28" height="28" fill="#fff"/><g fill="#e6e6e6"><rect x="0" y="0" width="4" height="4"/><rect x="8" y="0" width="4" height="4"/><rect x="16" y="0" width="4" height="4"/><rect x="24" y="0" width="4" height="4"/><rect x="4" y="4" width="4" height="4"/><rect x="12" y="4" width="4" height="4"/><rect x="20" y="4" width="4" height="4"/><rect x="0" y="8" width="4" height="4"/><rect x="8" y="8" width="4" height="4"/><rect x="16" y="8" width="4" height="4"/><rect x="24" y="8" width="4" height="4"/><rect x="4" y="12" width="4" height="4"/><rect x="12" y="12" width="4" height="4"/><rect x="20" y="12" width="4" height="4"/><rect x="0" y="16" width="4" height="4"/><rect x="8" y="16" width="4" height="4"/><rect x="16" y="16" width="4" height="4"/><rect x="24" y="16" width="4" height="4"/><rect x="4" y="20" width="4" height="4"/><rect x="12" y="20" width="4" height="4"/><rect x="20" y="20" width="4" height="4"/><rect x="0" y="24" width="4" height="4"/><rect x="8" y="24" width="4" height="4"/><rect x="16" y="24" width="4" height="4"/><rect x="24" y="24" width="4" height="4"/></g></svg>
<div class="t" style="left:870.60px;top:450.00px;font-size:10.5px;color:#ececec;font-weight:normal;transform:scaleX(0.9014);">Lớp4</div>
<div class="a" style="left:802px;top:473px;width:204px;height:31px;background:#595959;"></div>
<div class="a" style="left:805px;top:483px;width:9px;height:9px;background:#d8d8d8;border-radius:50%;box-shadow:inset 0 0 2px #888"></div>
<svg class="a" style="left:829px;top:474px;" width="28" height="28" viewBox="0 0 28 28"><rect width="28" height="28" fill="#fff"/><g fill="#e6e6e6"><rect x="0" y="0" width="4" height="4"/><rect x="8" y="0" width="4" height="4"/><rect x="16" y="0" width="4" height="4"/><rect x="24" y="0" width="4" height="4"/><rect x="4" y="4" width="4" height="4"/><rect x="12" y="4" width="4" height="4"/><rect x="20" y="4" width="4" height="4"/><rect x="0" y="8" width="4" height="4"/><rect x="8" y="8" width="4" height="4"/><rect x="16" y="8" width="4" height="4"/><rect x="24" y="8" width="4" height="4"/><rect x="4" y="12" width="4" height="4"/><rect x="12" y="12" width="4" height="4"/><rect x="20" y="12" width="4" height="4"/><rect x="0" y="16" width="4" height="4"/><rect x="8" y="16" width="4" height="4"/><rect x="16" y="16" width="4" height="4"/><rect x="24" y="16" width="4" height="4"/><rect x="4" y="20" width="4" height="4"/><rect x="12" y="20" width="4" height="4"/><rect x="20" y="20" width="4" height="4"/><rect x="0" y="24" width="4" height="4"/><rect x="8" y="24" width="4" height="4"/><rect x="16" y="24" width="4" height="4"/><rect x="24" y="24" width="4" height="4"/></g></svg>
<div class="t" style="left:870.60px;top:482.00px;font-size:10.5px;color:#ececec;font-weight:normal;transform:scaleX(0.9014);">Lớp3</div>
<div class="a" style="left:802px;top:505px;width:204px;height:31px;background:#595959;"></div>
<div class="a" style="left:805px;top:515px;width:9px;height:9px;background:#d8d8d8;border-radius:50%;box-shadow:inset 0 0 2px #888"></div>
<svg class="a" style="left:829px;top:506px;" width="28" height="28" viewBox="0 0 28 28"><rect width="28" height="28" fill="#fff"/><g fill="#e6e6e6"><rect x="0" y="0" width="4" height="4"/><rect x="8" y="0" width="4" height="4"/><rect x="16" y="0" width="4" height="4"/><rect x="24" y="0" width="4" height="4"/><rect x="4" y="4" width="4" height="4"/><rect x="12" y="4" width="4" height="4"/><rect x="20" y="4" width="4" height="4"/><rect x="0" y="8" width="4" height="4"/><rect x="8" y="8" width="4" height="4"/><rect x="16" y="8" width="4" height="4"/><rect x="24" y="8" width="4" height="4"/><rect x="4" y="12" width="4" height="4"/><rect x="12" y="12" width="4" height="4"/><rect x="20" y="12" width="4" height="4"/><rect x="0" y="16" width="4" height="4"/><rect x="8" y="16" width="4" height="4"/><rect x="16" y="16" width="4" height="4"/><rect x="24" y="16" width="4" height="4"/><rect x="4" y="20" width="4" height="4"/><rect x="12" y="20" width="4" height="4"/><rect x="20" y="20" width="4" height="4"/><rect x="0" y="24" width="4" height="4"/><rect x="8" y="24" width="4" height="4"/><rect x="16" y="24" width="4" height="4"/><rect x="24" y="24" width="4" height="4"/></g></svg>
<div class="t" style="left:870.60px;top:514.00px;font-size:10.5px;color:#ececec;font-weight:normal;transform:scaleX(0.9014);">Lớp2</div>
<div class="a" style="left:802px;top:537px;width:204px;height:31px;background:#595959;"></div>
<div class="a" style="left:805px;top:547px;width:9px;height:9px;background:#d8d8d8;border-radius:50%;box-shadow:inset 0 0 2px #888"></div>
<div class="a" style="left:829px;top:538px;width:28px;height:28px;background:#ffffff;"></div>
<div class="t" style="left:870.60px;top:546.00px;font-size:10.5px;color:#ececec;font-weight:normal;transform:scaleX(0.9014);">Lớp1</div>
<svg class="a" style="left:985px;top:318px;" width="20" height="20" viewBox="0 0 20 20"><g fill="#fff"><circle cx="10" cy="10" r="5.5"/><path d="M8.6 2H11.4V18H8.6ZM2 8.6H18V11.4H2Z"/><path d="M4 6L6 4L16 14L14 16ZM14 4L16 6L6 16L4 14Z"/></g><circle cx="10" cy="10" r="2.2" fill="#4f98d4"/></svg>
<div class="a" style="left:1007px;top:312px;width:16px;height:256px;background:#2e2e2e;"></div>
<div class="a" style="left:1008px;top:322px;width:14px;height:242px;background:#5a5a5a;border-radius:6px"></div>
<svg class="a" style="left:1007px;top:312px;" width="16" height="10" viewBox="0 0 16 10"><path d="M8 2L12 7H4Z" fill="#bbb"/></svg>
<svg class="a" style="left:1007px;top:566px;" width="16" height="10" viewBox="0 0 16 10"><path d="M8 8L12 3H4Z" fill="#bbb"/></svg>
<div class="a" style="left:800px;top:574px;width:224px;height:26px;background:#242424;"></div>
<div class="a" style="left:804px;top:577px;width:19px;height:19px;background:#464646;border-radius:2px"></div>
<div class="a" style="left:826px;top:577px;width:18px;height:19px;background:#464646;border-radius:2px"></div>
<div class="a" style="left:848px;top:577px;width:19px;height:19px;background:#464646;border-radius:2px"></div>
<div class="a" style="left:870px;top:577px;width:23px;height:19px;background:#464646;border-radius:2px"></div>
<div class="a" style="left:897px;top:577px;width:19px;height:19px;background:#464646;border-radius:2px"></div>
<div class="a" style="left:924px;top:577px;width:19px;height:19px;background:#464646;border-radius:2px"></div>
<div class="a" style="left:946px;top:577px;width:19px;height:19px;background:#464646;border-radius:2px"></div>
<div class="a" style="left:974px;top:577px;width:18px;height:19px;background:#464646;border-radius:2px"></div>
<div class="a" style="left:920px;top:580px;width:1px;height:13px;background:#555;"></div>
<div class="a" style="left:969px;top:580px;width:1px;height:13px;background:#555;"></div>
<svg class="a" style="left:804px;top:577px;" width="19" height="19" viewBox="0 0 19 19"><path d="M5 4H11L14 7V16H5Z" fill="none" stroke="#ddd" stroke-width="1.2"/></svg>
<svg class="a" style="left:826px;top:577px;" width="18" height="19" viewBox="0 0 18 19"><path d="M5 4H11L14 7V16H5Z" fill="none" stroke="#ddd" stroke-width="1.2"/><rect x="7" y="9" width="4" height="5" fill="#ddd"/></svg>
<svg class="a" style="left:848px;top:577px;" width="19" height="19" viewBox="0 0 19 19"><path d="M5 4H11L14 7V16H5Z" fill="none" stroke="#ddd" stroke-width="1.2"/><path d="M9.5 13V8M7.5 10L9.5 8L11.5 10" stroke="#ddd" stroke-width="1" fill="none"/></svg>
<svg class="a" style="left:870px;top:577px;" width="23" height="19" viewBox="0 0 23 19"><rect x="3" y="5" width="10" height="10" fill="none" stroke="#ddd" stroke-width="1" stroke-dasharray="2 1"/><path d="M8 8V15M4.5 11.5H11.5" stroke="#fff" stroke-width="1.6"/><path d="M15 9H21L18 12Z" fill="#ddd"/></svg>
<svg class="a" style="left:897px;top:577px;" width="19" height="19" viewBox="0 0 19 19"><path d="M3 6H8L9 7H16V15H3Z" fill="#e8e8e8"/></svg>
<svg class="a" style="left:924px;top:577px;" width="19" height="19" viewBox="0 0 19 19"><rect x="4" y="7" width="9" height="9" fill="none" stroke="#ddd" stroke-width="1.2"/><path d="M7 7V4H15V12H13" fill="none" stroke="#ddd" stroke-width="1.2"/></svg>
<svg class="a" style="left:946px;top:577px;" width="19" height="19" viewBox="0 0 19 19"><rect x="3" y="4" width="5" height="5" fill="none" stroke="#ddd"/><rect x="3" y="11" width="5" height="5" fill="#ddd"/><rect x="11" y="7" width="6" height="6" fill="#ddd"/></svg>
<svg class="a" style="left:974px;top:577px;" width="18" height="19" viewBox="0 0 18 19"><path d="M3 5H15M7 4V3H11V4" stroke="#ddd" stroke-width="1.2" fill="none"/><path d="M4.5 6H13.5V16H4.5Z" fill="none" stroke="#ddd" stroke-width="1.3"/><path d="M7 8V14M9 8V14M11 8V14" stroke="#ddd" stroke-width="1"/></svg>
<div class="t" style="left:793.00px;top:553.92px;font-size:15px;color:rgba(190,190,190,0.55);font-weight:normal;transform:scaleX(1.0644);">Activate Windows</div>
<div class="t" style="left:793.00px;top:575.04px;font-size:11px;color:rgba(190,190,190,0.55);font-weight:normal;transform:scaleX(1.1000);">Go to Settings to activate Windows.</div>
<div class="a" style="left:0px;top:600px;width:1024px;height:17px;background:#1f1f1f;"></div>
<div class="t" style="left:5.30px;top:603.50px;font-size:10.5px;color:#d0d0d0;font-weight:normal;transform:scaleX(0.8367);">3033 * 3000 pixel</div>
<div class="t" style="left:81.50px;top:603.50px;font-size:10.5px;color:#d0d0d0;font-weight:normal;transform:scaleX(0.8647);">(22 * 21.8cm)</div>
<div class="t" style="left:143.60px;top:603.50px;font-size:10.5px;color:#d0d0d0;font-weight:normal;transform:scaleX(0.8911);">350 dpi</div>
<div class="t" style="left:181.70px;top:603.50px;font-size:10.5px;color:#d0d0d0;font-weight:normal;transform:scaleX(0.8480);">25 %</div>
<div class="t" style="left:208.60px;top:603.50px;font-size:10.5px;color:#d0d0d0;font-weight:normal;transform:scaleX(0.8262);">( 2802, 264 )</div>
<div class="t" style="left:266.60px;top:603.50px;font-size:10.5px;color:#d0d0d0;font-weight:normal;transform:scaleX(0.9097);">Vẽ một đường thẳng bằng cách giữ phím Shift, Thay đổi cỡ cọ bằng cách giữ phím Ctrl, Alt và kéo</div>
<svg class="a" style="left:190px;top:79px;" width="590" height="505" viewBox="0 0 590 505"><g transform="translate(-190 -79)"><g fill="none" stroke="#0a0a0a" stroke-width="2.6" stroke-linecap="round" stroke-linejoin="round"><path d="M227.9 219 L227.9 240.3"/><path d="M227.5 219 Q231 213.5 234.6 213.8 Q239.5 215 240.9 220 Q242.5 226 241.9 230 Q241 235.5 238 237.5 Q236.5 238.6 235 238.9"/><path d="M247.7 223.2 Q246.5 231 245.8 237.8 Q247.5 237.2 249.2 236.4"/><path d="M255 224.7 Q255.2 230 255.7 235.6 Q258.5 235.5 260.8 234.2"/><path d="M263 221 Q262.5 230 261.6 237.8 Q260.5 243 258.7 245.8 Q255 247.5 250.6 246.6"/><path d="M266.7 232.7 Q268.5 220 270.5 212.5 Q272 210 273.2 213 Q274.5 218 275.4 222.5 Q277 214 279 211.8 Q280.5 211 280.3 214 Q279.5 226 279.1 237.8"/><path d="M297 233 Q293 231 291 235 Q290 239 293.5 238.5 Q296 237 296.5 233.5 Q296.8 237 298 239.5"/><path d="M300 239.5 Q300 234 300.7 230.8 Q303 230 305.8 231.5 Q307 235 307.3 239.5"/><path d="M311.7 217.6 L312.4 239.5 M312.4 232.2 Q315 230 317.5 230.8 Q319.5 235 320.5 240.3"/><path d="M335.1 217.6 L330 242.5"/><path d="M342.4 222 Q338 227 338.8 230.8 Q340 236.5 343.9 237.4 Q348 237.5 351.2 236.6"/><path d="M351.2 220.5 Q350 232 348.3 244"/><path d="M228.8 254.9 Q228.5 265 228.3 274.4 M229.8 266.8 Q237 265.5 244.4 264.6 M238.6 258.8 Q238 265 237.6 270.5"/><path d="M249.3 254.9 Q248 265 246.9 274.9 M250.3 255.9 Q253 253.5 256.1 254.2 Q259.5 257 259.1 262.7 Q258.5 268 257.1 271 Q255 273 253.2 273 M245.4 267.6 Q249 266.5 252.2 265.6 M254.2 250.3 L254.6 250.5"/><path d="M271.8 257.8 Q268.5 259.5 268.8 261.7 Q269.5 264.5 271.8 264.6 Q274.5 264 274.7 262.7 Q272 267.5 268.8 271.5 Q271.5 272.8 274.7 272.5"/><path d="M282.5 253.9 Q280.5 258 280.5 261.7 Q281 266 283.5 267.6 Q287 267.5 290.3 266.6 M291.3 258.8 Q290 266 289.3 273.4"/><path d="M295.2 256.8 Q300 256.8 304 257.8 Q301 265 299.1 271.5 M297.1 264.6 Q300 264 303 263.7"/></g><g fill="none" stroke="#2a2a2a" stroke-width="0.9" stroke-linecap="round"><path d="M447.3 199.7 Q451 193 455.5 187.3 Q460 179 466.5 173.7 Q473 168.5 480.2 167.5 Q484 168.5 487 170.3 Q491 166.5 496.6 166.2 Q501 167 506.1 169.6 Q512 174 517.1 180.5 Q522 188 528 195.5 Q533 201 537.6 206.5 Q540.5 211 540.3 217.4 Q540 221 539 224.3"/><path d="M447.3 199.7 Q443 204 440.5 207.9 Q437.5 212 436.4 217.4 Q435 223 435 228.4 Q434 234 433.7 240"/><path d="M454.2 195.5 Q449 201 447.3 207.9 Q447 217 448.7 227"/><path d="M472 185.3 Q470 200 469.2 214.7 Q467.5 228 466.5 240"/><path d="M474.7 195.5 Q475.5 218 476.1 240 Q476.3 254 474.7 267.9"/><path d="M502 188.7 Q500.5 201 500.7 214.7 Q501 228 504.8 240"/><path d="M496.6 199.7 Q495.5 220 495.2 240"/><path d="M476.1 187.3 Q480 190 484.3 192.8 M488.4 192.8 Q494 191 499.3 190.1"/><path d="M474.7 198.3 Q481 201.5 488.4 202.4 Q491.5 201 493.8 198.3"/><path d="M521.2 212 Q525 222 529.4 231.1 Q532 236 536.2 240"/><path d="M529 200 Q534 210 538 222"/><path d="M433.7 240 Q429 245 426.8 250 Q424.5 256 425.5 261 Q427.5 267 432.3 270.6 Q438 274 444.6 276 Q453 278 463.8 278.8"/><path d="M440.5 233.7 Q436 247 433.7 261 Q435 268 440.5 272 Q447 275 454.2 276"/><path d="M454.2 233.7 Q451 244 451.4 254.2 Q455 261 461 266.5 Q467 271 473.3 276"/><path d="M465.1 233.7 Q460 241 458.3 248.7 Q460 256 465.1 261 Q469 264 472 265.1"/><path d="M444 215 Q440 225 441 232"/><path d="M444.5 216.7 Q440 226 440 234.9 Q442 246 446.8 255.3"/><path d="M467.2 234.9 Q461 242 460.4 250.8 Q461 259 464.9 266.6 Q469 272 474 275.7"/><path d="M455.8 228.1 Q453 237 453.6 246.2 Q456 255 460.4 262.1"/><path d="M510.3 194 Q517 205 523.9 216.7 Q531 231 537.5 246.2"/><path d="M472 267.9 Q476 272 481.5 274.7 Q485 275.5 488.4 274.7 Q497 272 504.8 267.9"/><path d="M476 272 Q476.5 276 477.4 278.8 Q482 283 487 287 Q495 282 502 277.4 Q503 275 503.4 272"/><path d="M476 277.4 Q475 284 474.7 291 Q474 296 473.3 300 M504.8 277.4 Q505.5 284 506.1 291 L506.1 300"/><path d="M478.8 261 Q486 260.3 493.8 261 M484 262 Q486 263 488 262"/><path d="M493.8 220 Q495 230 496.6 240.5 Q499 245 502 247.3"/><path d="M539 224.3 Q542 235 540.3 244.6 Q544.5 250 545.8 256.9 Q544 263 540.3 267.9 Q537 272 533.5 274.7"/><path d="M502 240.5 Q505 252 507.5 265.1 Q504.5 270 500.7 274.7"/><path d="M515.7 240.5 Q521 243 525.3 247.3 Q521 251 515.7 254.2 Q511 259 507.5 265.1"/><path d="M532.1 250 Q530 256 526.6 261 Q521 266 515.7 270.6 Q514.5 274 514.3 277.4"/><path d="M536.2 266.5 L533.5 274.7"/><path d="M447.3 300 Q460 293 472 287 L474.7 291 M507.5 287 Q518 293 529.4 300"/><path d="M473.4 286.5 Q459 292 444.9 298.2 Q433 302 421.5 305.9 Q415 312 413.7 321.5 Q412.5 333 412.4 344.9"/><path d="M507.1 286.5 Q521 294 535.6 300.8 Q549 309 561.6 318.9 Q567 331 569.4 344.9 Q571 350 572 355.2"/><path d="M473.4 287.8 Q474 295 476 300.8 Q482 305 488.9 305.9 Q497 304 504.5 300.8 Q506.5 293 507.1 285.2"/><path d="M463 304.6 Q476 314 488.9 318.9 Q503 314 517.5 304.6"/><path d="M463 304.6 Q454 316 444.9 326.7 Q434 341 424.1 357.8"/><path d="M517.5 304.6 Q527 318 535.6 331.9 Q546 352 556.4 376"/><path d="M463 348 Q459 352 459.5 362 Q460.5 371 465 371 Q470 371 471 361 Q471.5 349 467 347.5 Q464.5 347 463 348 M464.5 351 Q462.5 356 463 364 Q464 368 465.5 367.5 Q467.5 367 468 360 Q468 352 466 351Z"/><path d="M494 349 Q488 347 484 354 Q481 362 483 368 Q486 372 491 371 Q497 369 496 362 Q495 357 490 358 Q486 359 485.5 362 M493 351.5 Q489 351 487 356"/><path d="M489 361 Q486.5 362 487 365 Q488 368 491 367.5 Q493 366 492.5 363 Q492 361 489 361Z"/><path d="M500 348 Q511 347 522 347 Q520 350 519 353 Q515 362 515 372.5 L511 372 Q511.5 362 516 351 Q508 351 501 352 Z"/><path d="M414.2 319.2 Q403 328 397.6 337.7 Q390 348 389.1 360.3 Q390 378 394.1 395.5 Q397 420 396.1 445.7 Q394 476 395.1 505.9 Q396 535 397.6 561.1 Q402 575 410.2 581.2"/><path d="M397.6 337.7 Q403 344 407.7 350.3 Q417 366 425.2 380.4 Q436 396 445.3 410.5 Q454 425 460.4 440.6 Q464 456 465.4 470.8 Q468 496 470.4 521 Q475 552 480.4 581.2"/><path d="M414.2 319.2 Q415 330 417.7 340.2 Q429 358 440.3 375.4 Q452 398 462.9 420.6 Q469 446 472.9 470.8"/><path d="M402.6 395.5 Q408 420 415.2 445.7 Q422 471 430.2 495.9 Q437 518 445.3 541 Q451 561 455.3 581.2"/><path d="M400.1 415.5 Q405 453 410.2 490.8 Q414 526 417.7 561.1"/><path d="M438.4 348.7 Q444 360 450 373.4"/><path d="M410.2 581.2 Q445 580 480.4 581.2"/><path d="M485.5 536 L505.5 538.5 M487 536 L489 582 M506 538.5 L505 582"/><path d="M473.7 425.5 Q483 434 493 437.9 M477 430 Q488 440 500 441 M484.8 486.2 Q490 496 501.3 500"/><path d="M558.3 317.7 Q565 330 570.8 342.8 Q579 356 585.9 367.9 Q590 386 589.9 405.5 Q587 438 583.4 470.8 Q586 496 585.9 521 Q583 551 580.8 581.2"/><path d="M558.3 350.3 Q549 362 540.7 375.4 Q530 392 520.6 410.5 Q512 428 505.5 445.7 Q502 463 500.5 480.8"/><path d="M585.9 370.4 Q578 383 570.8 395.5 Q558 413 545.7 430.6 Q537 450 530.6 470.8 Q524 490 520.6 510.9 Q524 546 530.6 581.2"/><path d="M500.5 480.8 Q506 501 510.6 521 Q516 541 520.6 561.1 Q523 571 525.6 581.2"/><path d="M575.8 410.5 Q569 440 565.8 470.8 Q567 500 568.3 531 Q564 556 560.8 581.2"/><path d="M535 581.5 Q558 582 580.8 581.2"/></g><path d="M494.5 230.2 Q504 226 515.5 230.8 Q514.5 232.8 513.5 234 Q505 230.8 496 234.5 Q495 232 494.5 230.2Z" fill="#0a0a0a"/><path d="M502 234 Q506 232.5 511 234 Q511.5 238 508 239.5 Q504 240 502.5 237.5Z" fill="#1a1a1a"/><circle cx="505" cy="236" r="1" fill="#fff"/><circle cx="508" cy="235.5" r="0.8" fill="#fff"/><path d="M494.7 232.2 Q494.5 238 497 240 Q501 242.5 506.9 240.9" fill="none" stroke="#333" stroke-width="0.8"/></g></svg>
</body></html>
